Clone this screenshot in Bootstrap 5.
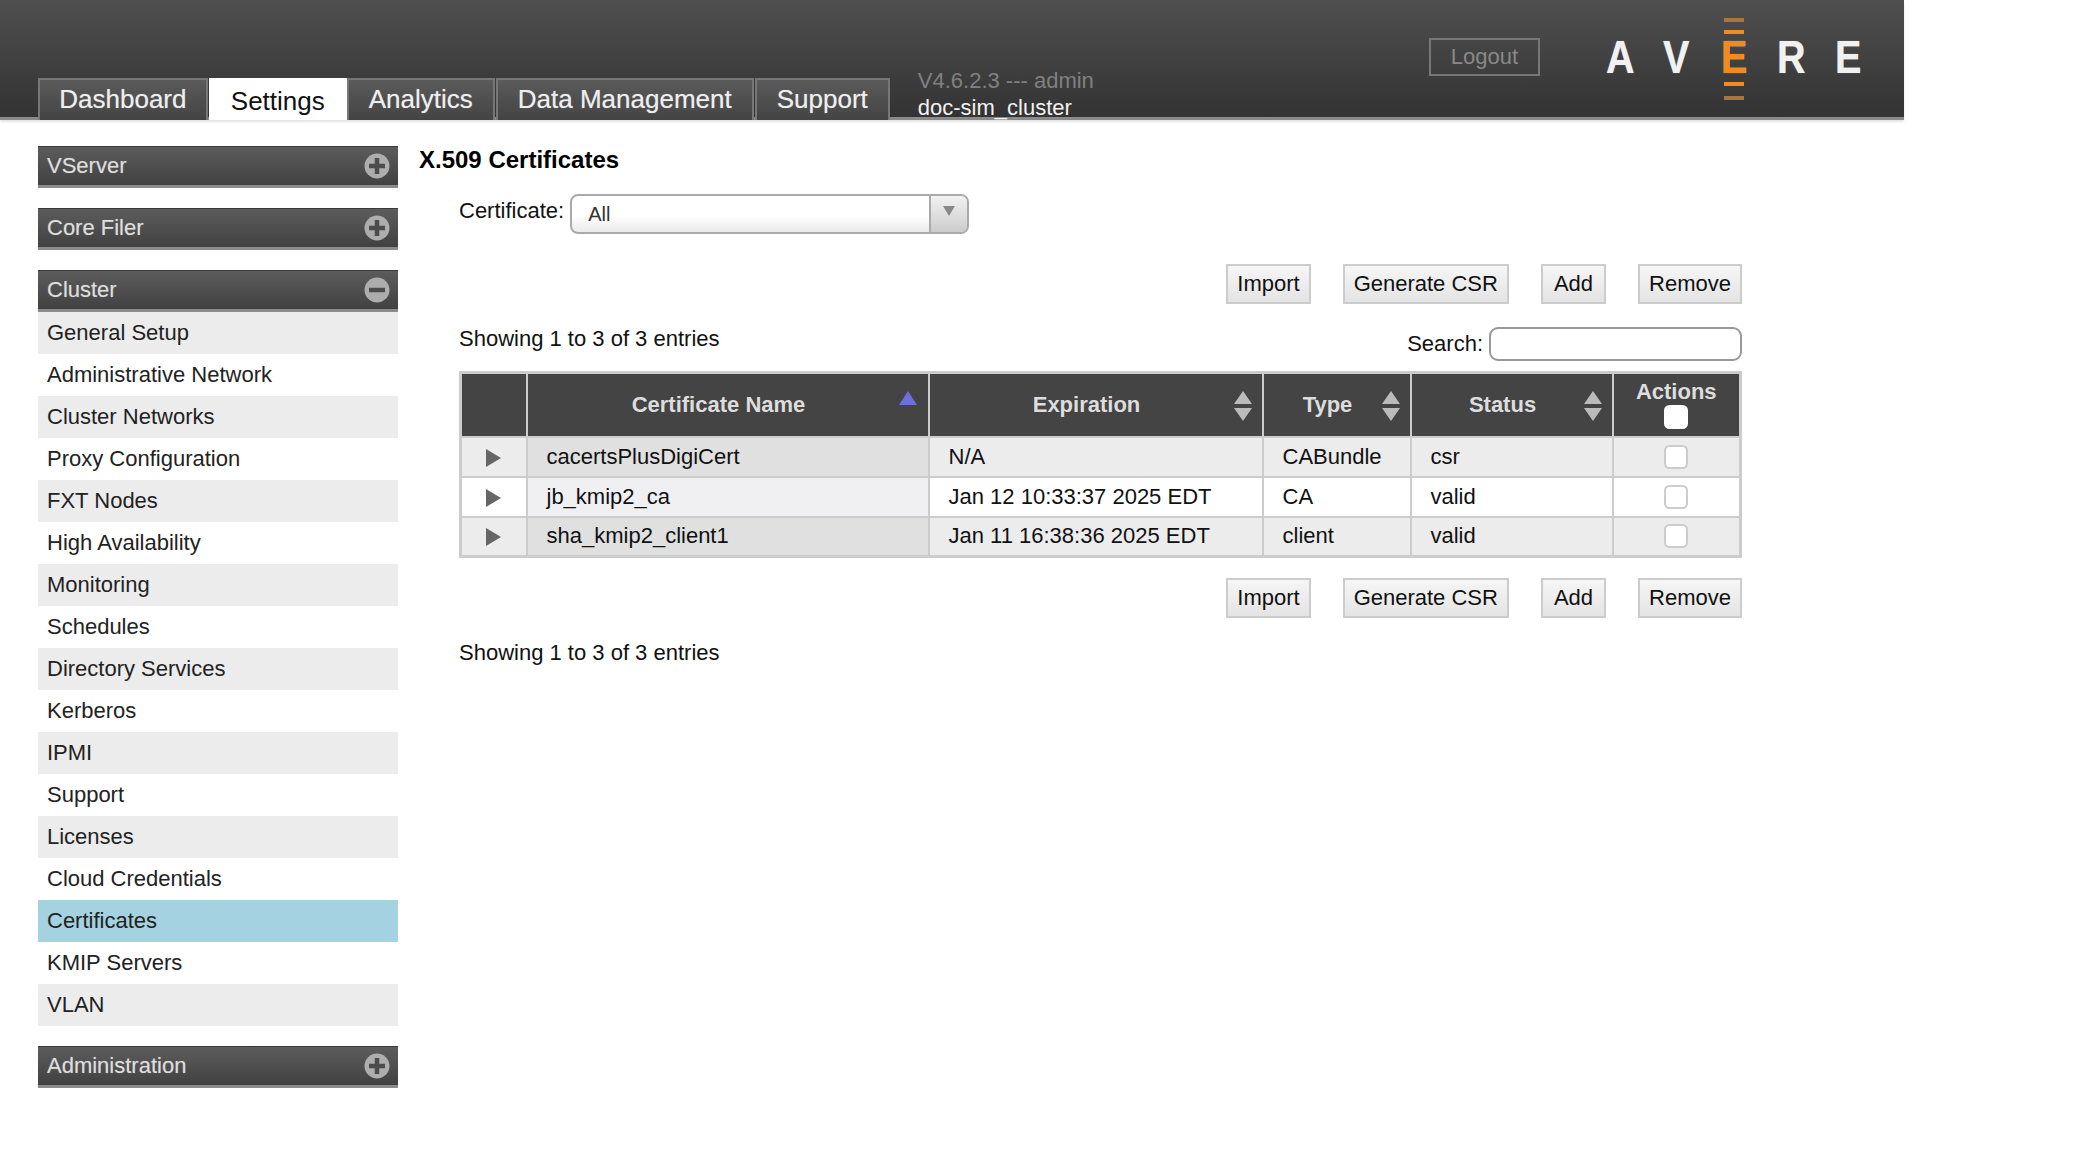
<!DOCTYPE html>
<html lang="en"><head><meta charset="utf-8"><title>X.509 Certificates</title>
<link href="https://cdn.jsdelivr.net/npm/bootstrap@5.3.0/dist/css/bootstrap.min.css" rel="stylesheet">
<style>
body{font-family:"Liberation Sans",Arial,sans-serif;font-size:22px;line-height:1.2;color:#111;background:#fff}
.topbar{width:1904px;height:120px;background:linear-gradient(#4f4f4f,#333);border-bottom:3px solid #8a8a8a;box-shadow:0 2px 2px #e4e4e4;padding-left:38px}
.tabrow{height:120px}
.tabitem{height:42px;padding:0 20px;font-size:26px;line-height:39px;color:#eee;background:linear-gradient(#5a5a5a,#444);border:2px solid #777;border-bottom:0;margin-right:1px;text-decoration:none;text-shadow:0 0 1px rgba(255,255,255,.45)}
.tabitem.is-first{padding:0 19.3px}
.tabitem.is-on{background:#fff;color:#111;border-color:#fff;line-height:43px;margin-right:0;padding:0 20px;text-shadow:none}
.verbox{margin-left:27px;font-size:22px;line-height:27px;height:50px;align-self:flex-end}
.vergray{color:#808080}.verwhite{color:#f2f2f2}
.logoutbtn{width:111px;height:38px;margin-left:335px;margin-top:38px;border:2px solid #777;color:#888;font-size:22px;line-height:34px;text-align:center}
.logobox{width:252px;margin-left:66px;margin-top:18px;height:82px;position:relative}
.logoltr{position:absolute;top:19px;font-size:46px;line-height:40px;font-weight:700;color:#f1f1f1;transform:scaleX(.86);transform-origin:left;text-shadow:0 0 1px rgba(255,255,255,.6)}
.logobar{position:absolute;left:118px;width:20px;height:4px;background:#f28a1f}
.logobar.dim{background:#a9763f}
.mainwrap{padding:26px 0 0 38px}
.sidecol{width:360px}
.panelhead{height:42px;padding:0 8px 0 9px;background:linear-gradient(#5c5c5c,#414141);border-top:1px solid #3a3a3a;border-bottom:3px solid #8b8b8b;color:#ddd;font-size:22px;margin-bottom:20px;text-shadow:0 0 1px rgba(255,255,255,.35)}
.panelhead.is-open{margin-bottom:0}
.sidelist{margin-bottom:20px}
.sideitem{height:42px;line-height:41px;padding:0 9px;color:#222}
.sideitem:nth-child(odd){background:#ececec}
.sideitem.is-cur{background:#a5d2e0}
.contentcol{margin-left:21px;width:1323px}
.pagetitle{font-size:24px;font-weight:700;line-height:30px;margin:-1px 0 0;color:#000}
.innerbox{margin-left:40px;width:1283px}
.filterrow{margin-top:19px;height:40px}
.filterlabel{padding-top:4px}
.fakeselect{width:399px;height:40px;border:2px solid #aaa;border-radius:8px;margin-left:6px;background:linear-gradient(#fff 55%,#eaeaea);overflow:hidden;color:#333;font-size:20px}
.fakeselect .seltext{padding:2px 0 0 16px;line-height:32px}
.selarrow{width:38px;height:100%;border-left:2px solid #aaa;background:linear-gradient(#f2f2f2,#ccc)}
.toolrow{margin-top:30px;gap:32px}
.toolrow.lower{margin-top:20px}
.actbtn{height:40px;padding:0 9px;border:2px solid #ccc;border-radius:0;background:linear-gradient(#f6f6f6,#e4e4e4);color:#111;font-size:22px;line-height:34px}
.actbtn.addbtn{padding:0 11px}
.searchrow{margin-top:23px;height:34px}
.showtext{margin-top:-1px}
.searchbox{width:253px;height:34px;border:2px solid #999;border-radius:9px;margin-left:6px;background:#fff}
.table.certtbl{margin:10px 0 0;width:1280px;table-layout:fixed;border-collapse:collapse;border:3px solid #ccc;font-size:22px}
.table.certtbl>thead>tr>th{background:#444;color:#ddd;height:64px;padding:0 18px 0 0;border:2px solid #ccc;text-align:center;position:relative;vertical-align:middle;line-height:24px;font-weight:700}
.table.certtbl>thead>tr>th.actcol{padding:0;line-height:22px}
.table.certtbl>tbody>tr>td{height:40px;padding:0 19px;border:2px solid #ccc;background:#ececec;color:#111;vertical-align:middle;line-height:26px}
.table.certtbl>tbody>tr>td.namecell{background:#e0e0e0}
.table.certtbl>tbody>tr.evenrow>td{background:#fff}
.table.certtbl>tbody>tr.evenrow>td.namecell{background:#f0f0f3}
.table.certtbl>tbody>tr>td.cellmid{padding:0;text-align:center}
.colw1{width:66px}.colw2{width:402px}.colw3{width:334px}.colw4{width:148px}.colw5{width:202px}.colw6{width:128px}
.sorticon{position:absolute;right:10px;top:17px}
.sorticon.one{right:11px;top:17px}
.tickbox{width:24px;height:24px;margin:-2px 0 0;border:2px solid #ccc;border-radius:5px;background-color:#fff;vertical-align:middle}
th .tickbox{border-color:#fff;display:block;margin:2px auto 0}
.footinfo{margin-top:22px}
</style></head>
<body>
<header class="topbar d-flex">
  <nav class="tabrow d-flex align-items-end">
    <a class="tabitem is-first" href="#">Dashboard</a>
    <a class="tabitem is-on" href="#">Settings</a>
    <a class="tabitem" href="#">Analytics</a>
    <a class="tabitem" href="#">Data Management</a>
    <a class="tabitem" href="#">Support</a>
  </nav>
  <div class="verbox"><div class="vergray">V4.6.2.3 --- admin</div><div class="verwhite">doc-sim_cluster</div></div>
  <div class="logoutbtn">Logout</div>
  <div class="logobox" aria-label="Avere logo">
    <span class="logobar dim" style="top:0"></span><span class="logobar" style="top:12px"></span>
    <span class="logobar" style="top:64px"></span><span class="logobar dim" style="top:78px"></span>
    <span class="logoltr" style="left:0">A</span><span class="logoltr" style="left:57px">V</span>
    <span class="logoltr" style="left:115px;color:#f28a1f">E</span><span class="logoltr" style="left:171px">R</span><span class="logoltr" style="left:229px">E</span>
  </div>
</header>
<div class="mainwrap d-flex align-items-start">
  <aside class="sidecol">
    <div class="panelhead d-flex align-items-center justify-content-between">VServer <svg width="26" height="26" viewBox="0 0 26 26"><circle cx="13" cy="13" r="12.5" fill="#adadad"/><path d="M13 5v16M5 13h16" stroke="#4c4c4c" stroke-width="4.5"/></svg></div>
    <div class="panelhead d-flex align-items-center justify-content-between">Core Filer <svg width="26" height="26" viewBox="0 0 26 26"><circle cx="13" cy="13" r="12.5" fill="#adadad"/><path d="M13 5v16M5 13h16" stroke="#4c4c4c" stroke-width="4.5"/></svg></div>
    <div class="panelhead is-open d-flex align-items-center justify-content-between">Cluster <svg width="26" height="26" viewBox="0 0 26 26"><circle cx="13" cy="13" r="12.5" fill="#adadad"/><path d="M5 13h16" stroke="#4c4c4c" stroke-width="4.5"/></svg></div>
    <div class="sidelist">
      <div class="sideitem">General Setup</div><div class="sideitem">Administrative Network</div><div class="sideitem">Cluster Networks</div><div class="sideitem">Proxy Configuration</div><div class="sideitem">FXT Nodes</div><div class="sideitem">High Availability</div><div class="sideitem">Monitoring</div><div class="sideitem">Schedules</div><div class="sideitem">Directory Services</div><div class="sideitem">Kerberos</div><div class="sideitem">IPMI</div><div class="sideitem">Support</div><div class="sideitem">Licenses</div><div class="sideitem">Cloud Credentials</div><div class="sideitem is-cur">Certificates</div><div class="sideitem">KMIP Servers</div><div class="sideitem">VLAN</div>
    </div>
    <div class="panelhead d-flex align-items-center justify-content-between">Administration <svg width="26" height="26" viewBox="0 0 26 26"><circle cx="13" cy="13" r="12.5" fill="#adadad"/><path d="M13 5v16M5 13h16" stroke="#4c4c4c" stroke-width="4.5"/></svg></div>
  </aside>
  <main class="contentcol">
    <h1 class="pagetitle">X.509 Certificates</h1>
    <div class="innerbox">
      <div class="filterrow d-flex align-items-start"><span class="filterlabel">Certificate:</span>
        <div class="fakeselect d-flex justify-content-between"><span class="seltext">All</span><span class="selarrow d-flex justify-content-center"><svg width="14" height="30" viewBox="0 0 14 30"><path d="M1 10h12l-6 10z" fill="#888"/></svg></span></div>
      </div>
      <div class="toolrow d-flex justify-content-end"><button class="btn actbtn">Import</button><button class="btn actbtn">Generate CSR</button><button class="btn actbtn addbtn">Add</button><button class="btn actbtn">Remove</button></div>
      <div class="searchrow d-flex justify-content-between align-items-start"><span class="showtext">Showing 1 to 3 of 3 entries</span><span class="d-flex align-items-center"><span>Search:</span><input class="searchbox" type="text" aria-label="Search"></span></div>
      <table class="table certtbl">
        <colgroup><col class="colw1"><col class="colw2"><col class="colw3"><col class="colw4"><col class="colw5"><col class="colw6"></colgroup>
        <thead><tr><th></th>
          <th>Certificate Name<svg class="sorticon one" width="18" height="14" viewBox="0 0 18 14"><path d="M9 0l9 14H0z" fill="#6a70dc"/></svg></th>
          <th>Expiration<svg class="sorticon" width="18" height="30" viewBox="0 0 18 30"><path d="M9 0l9 13H0zM9 30l9-13H0z" fill="#bbb"/></svg></th>
          <th>Type<svg class="sorticon" width="18" height="30" viewBox="0 0 18 30"><path d="M9 0l9 13H0zM9 30l9-13H0z" fill="#bbb"/></svg></th>
          <th>Status<svg class="sorticon" width="18" height="30" viewBox="0 0 18 30"><path d="M9 0l9 13H0zM9 30l9-13H0z" fill="#bbb"/></svg></th>
          <th class="actcol">Actions<input class="tickbox form-check-input" type="checkbox" aria-label="Select all"></th></tr></thead>
        <tbody>
          <tr><td class="cellmid"><svg width="15" height="18" viewBox="0 0 15 18"><path d="M0 0l15 9L0 18z" fill="#666"/></svg></td><td class="namecell">cacertsPlusDigiCert</td><td>N/A</td><td>CABundle</td><td>csr</td><td class="cellmid"><input class="tickbox form-check-input" type="checkbox" aria-label="Select"></td></tr>
          <tr class="evenrow"><td class="cellmid"><svg width="15" height="18" viewBox="0 0 15 18"><path d="M0 0l15 9L0 18z" fill="#666"/></svg></td><td class="namecell">jb_kmip2_ca</td><td>Jan 12 10:33:37 2025 EDT</td><td>CA</td><td>valid</td><td class="cellmid"><input class="tickbox form-check-input" type="checkbox" aria-label="Select"></td></tr>
          <tr><td class="cellmid"><svg width="15" height="18" viewBox="0 0 15 18"><path d="M0 0l15 9L0 18z" fill="#666"/></svg></td><td class="namecell">sha_kmip2_client1</td><td>Jan 11 16:38:36 2025 EDT</td><td>client</td><td>valid</td><td class="cellmid"><input class="tickbox form-check-input" type="checkbox" aria-label="Select"></td></tr>
        </tbody>
      </table>
      <div class="toolrow lower d-flex justify-content-end"><button class="btn actbtn">Import</button><button class="btn actbtn">Generate CSR</button><button class="btn actbtn addbtn">Add</button><button class="btn actbtn">Remove</button></div>
      <div class="footinfo">Showing 1 to 3 of 3 entries</div>
    </div>
  </main>
</div>
</body></html>
